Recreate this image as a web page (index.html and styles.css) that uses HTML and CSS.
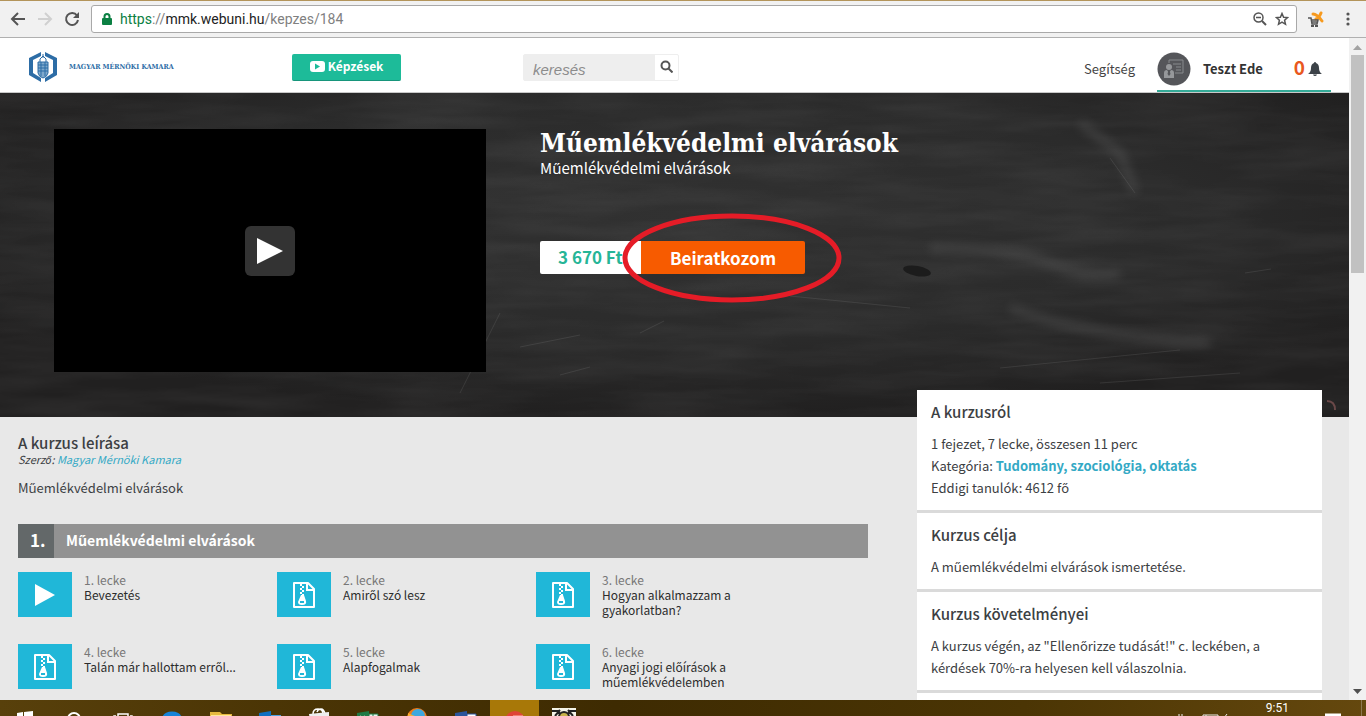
FILE: index.html
```html
<!DOCTYPE html>
<html lang="hu">
<head>
<meta charset="utf-8">
<title>Műemlékvédelmi elvárások</title>
<link rel="stylesheet" href="styles.css">
</head>
<body>
<svg class="defs" aria-hidden="true">
  <symbol id="zip" viewBox="0 0 24 28">
    <path fill="none" stroke="#fff" stroke-width="2" stroke-linejoin="round" d="M2 2h14l6 6v18H2z"/>
    <path fill="none" stroke="#fff" stroke-width="2" d="M15 2v7h7"/>
    <path fill="#fff" d="M8 3h2v2H8zM10 5h2v2h-2zM8 7h2v2H8zM10 9h2v2h-2zM8 11h2v2H8zM10 13h2v2h-2z"/>
    <path fill="#fff" fill-rule="evenodd" d="M9 14h3l2 6q1 4-4 4-4 0-4-3zM8 20v2h4v-2z"/>
  </symbol>
</svg>

<header class="browser">
  <button class="nav-btn" aria-label="Vissza"><svg width="16" height="16" viewBox="0 0 16 16"><path fill="none" stroke="#555" stroke-width="2" d="M15 8H2M8 2L2 8l6 6"/></svg></button>
  <button class="nav-btn" aria-label="Előre"><svg width="16" height="16" viewBox="0 0 16 16"><path fill="none" stroke="#d0d0d0" stroke-width="2" d="M1 8h13M8 2l6 6-6 6"/></svg></button>
  <button class="nav-btn" aria-label="Újratöltés"><svg width="16" height="16" viewBox="0 0 16 16"><path fill="none" stroke="#555" stroke-width="2" d="M13 4.500A6 6 0 1 0 14 9"/><path fill="#555" d="M15 1v6H9z"/></svg></button>
  <div class="address">
    <svg width="10" height="13" viewBox="0 0 10 13"><path fill="none" stroke="#0b8043" stroke-width="2" d="M2.500 6V3.500a2.500 2.500 0 0 1 5 0V6"/><rect y="5" width="10" height="7" rx="1" fill="#0b8043"/></svg>
    <span class="url"><span class="secure">https</span>://<span class="host">mmk.webuni.hu</span>/kepzes/184</span>
    <button class="nav-btn" aria-label="Nagyítás"><svg width="14" height="14" viewBox="0 0 14 14"><g fill="none" stroke="#555" stroke-width="1.500"><circle cx="5.500" cy="5.500" r="4.500"/><path d="M3 5.500h5"/><path stroke-width="2" d="M9 9l4 4"/></g></svg></button>
    <button class="nav-btn" aria-label="Könyvjelző"><svg width="14" height="14" viewBox="0 0 14 14"><path fill="none" stroke="#555" stroke-width="1.500" d="M7 1.500l1.600 3.700 4 .4-3 2.700.9 4L7 10.200l-3.500 2.100.9-4-3-2.700 4-.4z"/></svg></button>
  </div>
  <button class="nav-btn ext" aria-label="Bővítmény"><svg width="16" height="16" viewBox="0 0 16 16"><path fill="none" stroke="#f79a1e" stroke-width="3" stroke-linecap="round" d="M5 3q4 0 9 7M13 2q-2 5-5 6"/><path fill="none" stroke="#555" stroke-width="1.500" d="M0 7h3l1 6h5l1-4H3M4 11h5"/><path fill="#555" d="M3 14h3v2H3zM7 14h3v2H7z"/></svg></button>
  <button class="nav-btn" aria-label="Menü"><svg width="4" height="14" viewBox="0 0 4 14" fill="#555"><circle cx="2" cy="2" r="1.600"/><circle cx="2" cy="7" r="1.600"/><circle cx="2" cy="12" r="1.600"/></svg></button>
</header>

<div class="viewport">
  <div class="page">
    <div class="site-head">
      <a class="logo" href="#">
        <svg width="30" height="32" viewBox="0 0 30 32"><path fill="#2d6da6" d="M13 1v4L5 9v13l8 5v4L1 24V7zM17 1l12 6v17l-12 7v-4l8-5V9l-8-4z"/><path fill="#7fa9cc" stroke="#2d6da6" d="M10 11h10v11q-1 4-5 5-4-1-5-5z"/><path fill="none" stroke="#2d6da6" d="M12 11V8l3-3 3 3v3M10 14h10M10 17h10M10 20h10M13 11v14M17 11v14M15 3v4"/></svg>
        <span>MAGYAR MÉRNÖKI KAMARA</span>
      </a>
      <div class="head-nav"><button class="courses"><svg width="15" height="11" viewBox="0 0 15 11"><rect width="15" height="11" rx="3" fill="#fff"/><path fill="#1dbb99" d="M5 2.500l5 3-5 3z"/></svg>Képzések</button></div>
      <form class="search">
        <input type="text" placeholder="keresés" aria-label="keresés">
        <button type="button" aria-label="Keresés indítása"><svg width="13" height="13" viewBox="0 0 13 13"><g fill="none" stroke="#555" stroke-width="2"><circle cx="5.500" cy="5.500" r="4"/><path d="M8.500 8.500l4 4"/></g></svg></button>
      </form>
      <a class="help" href="#">Segítség</a>
      <a class="user" href="#">
        <svg width="34" height="34" viewBox="0 0 34 34"><circle cx="17" cy="17" r="16.500" fill="#55565a"/><g fill="none" stroke="#888a8d"><path d="M12 11V8h14v13h-8M16 12h8M19 15h5M19 18h5"/></g><circle cx="12" cy="15" r="3" fill="#96989b"/><path fill="#96989b" d="M7 26v-5q0-3 3-3l2 3 2-3q3 0 3 3v5z"/><path fill="#55565a" d="M11.500 18h1l1 4-1.500 2-1.500-2z"/></svg>
        <span class="name">Teszt Ede</span>
        <span class="count">0</span>
        <svg width="14" height="14" viewBox="0 0 14 14"><path fill="#3c4248" d="M7 0q1 0 1 1 3 1 3 5 0 4 3 6H0q3-2 3-6 0-4 3-5 0-1 1-1zM5 12.500h4q-.5 1.500-2 1.500t-2-1.500z"/></svg>
      </a>
    </div>

    <section class="hero">
      <svg class="board" preserveAspectRatio="none" viewBox="0 0 1349 324" aria-hidden="true">
        <defs>
          <radialGradient id="bg" cx=".5" cy=".38" r=".62"><stop offset="0" stop-color="#313131"/><stop offset=".6" stop-color="#2b2b2b"/><stop offset="1" stop-color="#212020"/></radialGradient>
          <filter id="grain"><feTurbulence type="fractalNoise" baseFrequency=".008 .06" numOctaves="3" seed="4"/><feColorMatrix values="0 0 0 0 .6 0 0 0 0 .6 0 0 0 0 .6 .2 0 0 0 -.06"/></filter>
          <filter id="soft"><feGaussianBlur stdDeviation="5"/></filter>
        </defs>
        <rect width="1349" height="324" fill="url(#bg)"/>
        <rect width="1349" height="324" filter="url(#grain)" opacity=".6"/>
        <g fill="none" stroke="#777" filter="url(#soft)" opacity=".25"><path stroke-width="9" d="M930 155q80 0 120 15t70 10M1010 215q80 30 200 35M1080 30l40 30 15 40"/></g>
        <ellipse cx="917" cy="178" rx="14" ry="5" fill="#161616" opacity=".8" transform="rotate(10 917 178)"/>
        <g fill="none" stroke="#999" opacity=".16"><path d="M520 254l60-12M790 203l120 12M1110 65l25 35M1000 275l180-18M1100 290l140-10M1245 180l26-4M460 300l40-80M640 240l24-12M560 282l30-8"/></g>
        <path fill="none" stroke="#6a4848" stroke-width="2" d="M1327 308q8 0 8 9"/>
      </svg>
      <div class="video"><button aria-label="Lejátszás"><svg width="26" height="26" viewBox="0 0 26 26"><path fill="#fff" d="M0 0l26 13L0 26z"/></svg></button></div>
      <div class="intro">
        <h1>Műemlékvédelmi elvárások</h1>
        <p>Műemlékvédelmi elvárások</p>
        <div class="purchase">
          <span class="price">3 670 Ft</span><button class="enroll">Beiratkozom</button>
          <svg class="mark" width="220" height="92" viewBox="0 0 220 92" aria-hidden="true"><ellipse cx="110" cy="46" rx="107" ry="42" fill="none" stroke="#e51c27" stroke-width="5"/></svg>
        </div>
      </div>
    </section>

    <div class="columns">
      <main class="course">
        <h2>A kurzus leírása</h2>
        <p class="author">Szerző: <a href="#">Magyar Mérnöki Kamara</a></p>
        <p class="desc">Műemlékvédelmi elvárások</p>
        <h3 class="chapter"><span class="num">1.</span><span class="chapter-name">Műemlékvédelmi elvárások</span></h3>
        <ul class="lessons">
          <li><span class="tile"><svg width="22" height="24" viewBox="0 0 22 24"><path fill="#fff" d="M1 1l20 11L1 23z"/></svg></span><p><span>1. lecke</span><a href="#">Bevezetés</a></p></li>
          <li><span class="tile"><svg width="24" height="28"><use href="#zip"/></svg></span><p><span>2. lecke</span><a href="#">Amiről szó lesz</a></p></li>
          <li><span class="tile"><svg width="24" height="28"><use href="#zip"/></svg></span><p><span>3. lecke</span><a href="#">Hogyan alkalmazzam a gyakorlatban?</a></p></li>
          <li><span class="tile"><svg width="24" height="28"><use href="#zip"/></svg></span><p><span>4. lecke</span><a href="#">Talán már hallottam erről...</a></p></li>
          <li><span class="tile"><svg width="24" height="28"><use href="#zip"/></svg></span><p><span>5. lecke</span><a href="#">Alapfogalmak</a></p></li>
          <li><span class="tile"><svg width="24" height="28"><use href="#zip"/></svg></span><p><span>6. lecke</span><a href="#">Anyagi jogi előírások a műemlékvédelemben</a></p></li>
        </ul>
      </main>
      <aside class="side">
        <section><h2>A kurzusról</h2><p>1 fejezet, 7 lecke, összesen 11 perc<br>Kategória: <a href="#">Tudomány, szociológia, oktatás</a><br>Eddigi tanulók: 4612 fő</p></section>
        <section><h2>Kurzus célja</h2><p>A műemlékvédelmi elvárások ismertetése.</p></section>
        <section><h2>Kurzus követelményei</h2><p>A kurzus végén, az "Ellenőrizze tudását!" c. leckében, a kérdések 70%-ra helyesen kell válaszolnia.</p></section>
        <section></section>
      </aside>
    </div>
  </div>
  <div class="scrollbar">
    <svg width="9" height="5" viewBox="0 0 9 5"><path fill="#a3a3a3" d="M0 5l4.500-5L9 5z"/></svg>
    <div class="thumb"></div>
    <svg width="9" height="5" viewBox="0 0 9 5"><path fill="#505050" d="M0 0l4.500 5L9 0z"/></svg>
  </div>
</div>

<footer class="taskbar">
  <div class="apps">
    <span><svg width="16" height="16" viewBox="0 0 16 16" fill="#fff"><path d="M0 2l6-1v7H0zM7 1l9-1v8H7zM0 9h16v7H0z"/></svg></span>
    <span><svg width="16" height="16" viewBox="0 0 16 16"><circle cx="8" cy="8" r="6" fill="none" stroke="#fff" stroke-width="2"/></svg></span>
    <span><svg width="20" height="16" viewBox="0 0 20 16" fill="none" stroke="#fff" stroke-width="1.500"><path d="M5 3h10v12H5zM3 5H1v10M17 5h2v10"/></svg></span>
    <span><svg width="20" height="20" viewBox="0 0 20 20"><path fill="none" stroke="#1683d8" stroke-width="5" d="M2 11q0-8 8-8t8 8H6"/></svg></span>
    <span><svg width="22" height="18" viewBox="0 0 22 18"><path fill="#e7b93f" d="M0 1h10l2 2h10v15H0z"/><path fill="#ffe79c" d="M1 4h20v14H1z"/></svg></span>
    <span><svg width="22" height="20" viewBox="0 0 22 20"><path fill="#0f6fc0" d="M0 2l12-2v20H0z"/><path fill="#4ca0e0" d="M12 4h10v16H12z"/><circle cx="6" cy="9" r="3" fill="none" stroke="#fff" stroke-width="2"/></svg></span>
    <span class="tall"><svg width="20" height="20" viewBox="0 0 20 20"><path fill="none" stroke="#fff" stroke-width="1.500" d="M4 6q0-5 5-5t5 5M8 4q1-3 4-3t4 5"/><path fill="#eee" d="M0 6l20-2v16H2z"/></svg></span>
    <span><svg width="22" height="20" viewBox="0 0 22 20"><path fill="#1f7a45" d="M0 2l12-2v20H0z"/><path fill="#e9f5ee" stroke="#1f7a45" d="M12 3h9v17h-9zM12 6h9M16 3v16"/><path stroke="#fff" stroke-width="2" d="M3 5l5 8M8 5l-5 8"/></svg></span>
    <span class="tall"><svg width="20" height="20" viewBox="0 0 20 20"><circle cx="10" cy="10" r="10" fill="#ee7b19"/><circle cx="11" cy="8" r="7" fill="#3da8df"/><path fill="#f9b233" d="M1 5l4 2 3 1-2 6-5-2z"/></svg></span>
    <span><svg width="22" height="20" viewBox="0 0 22 20"><path fill="#2b559b" d="M0 2l12-2v20H0z"/><path fill="#fff" stroke="#2b559b" d="M12 3h9v17h-9zM14 6h5M14 9h5"/></svg></span>
    <span class="active"><svg width="20" height="20" viewBox="0 0 20 20"><circle cx="10" cy="10" r="10" fill="#df4436"/><path stroke="#f0806f" stroke-width="2" d="M8 5h10"/></svg></span>
    <span class="tall"><svg width="24" height="20" viewBox="0 0 24 20"><path fill="#f4f4e8" d="M0 0h24v20H0z"/><path fill="none" stroke="#222" stroke-width="2" d="M0 3h6l3 4M24 3h-6l-3 4M3 8l5-6M21 8l-5-6"/><circle cx="12" cy="9" r="5" fill="#c7b34a" stroke="#222" stroke-width="2"/></svg></span>
  </div>
  <div class="tray">
    <svg width="54" height="8" viewBox="0 0 54 8" fill="none" stroke="#eee"><path d="M5 1v7M8 1v7M29 2h15v7H29zM32 2v7M53 1l-3 4h-2"/></svg>
    <time>9:51</time>
    <svg width="16" height="8" viewBox="0 0 16 8"><path fill="none" stroke="#fff" stroke-width="3" d="M1 8V2h14v6"/></svg>
    <span class="peek"></span>
  </div>
</footer>
</body>
</html>
```
FILE: styles.css
```css
* { box-sizing: border-box; }
body {
  margin: 0;
  height: 100vh;
  display: flex;
  flex-direction: column;
  overflow: hidden;
  font: 14px/22px "Noto Sans CJK JP", "Noto Sans", sans-serif;
  color: #3c4043;
}
h1, h2, h3, p, ul { margin: 0; padding: 0; }
button { border: 0; padding: 0; background: none; font: inherit; color: inherit; }
a { color: #33a9c5; text-decoration: none; }
svg { display: block; flex: none; }
.defs { display: block; position: absolute; width: 0; height: 0; }

.browser {
  flex: none;
  display: flex;
  align-items: center;
  gap: 11px;
  height: 38px;
  padding: 0 16px 0 10px;
  background: #f1f1f1;
  border-top: 1px solid #b3945a;
  border-bottom: 1px solid #b0b0b0;
}
.address {
  flex: 1;
  display: flex;
  align-items: center;
  gap: 8px;
  height: 28px;
  padding: 0 7px 0 10px;
  background: #fff;
  border: 1px solid #a9a9a9;
  border-radius: 3px;
  font: 14px/20px Roboto, sans-serif;
}
.url { flex: 1; color: #808080; }
.secure { color: #0b8043; }
.host { color: #222; }
.ext { margin-right: 11px; }

.viewport { flex: 1; min-height: 0; display: flex; }
.page { flex: 1; min-width: 0; overflow: hidden; background: #e8e8e8; }
.scrollbar {
  flex: none;
  width: 17px;
  display: flex;
  flex-direction: column;
  align-items: center;
  padding: 7px 0 6px;
  gap: 5px;
  background: #f1f1f1;
}
.thumb { width: 13px; height: 218px; margin-bottom: auto; background: #c1c1c1; }

.site-head {
  display: flex;
  height: 55px;
  padding: 0 18px 0 28px;
  background: #fff;
  border-bottom: 1px solid #c8c8c8;
}
.logo {
  flex: none;
  width: 264px;
  display: flex;
  align-items: center;
  gap: 11px;
  padding-top: 4px;
  font: bold 7px/10px "DejaVu Serif Condensed", "DejaVu Serif", serif;
  color: #2d6da6;
}
.head-nav { width: 231px; padding-top: 16px; }
.courses {
  display: flex;
  align-items: center;
  justify-content: center;
  gap: 3px;
  width: 109px;
  height: 27px;
  padding-bottom: 2px;
  background: #1dbb99;
  border-bottom: 1px solid #17957b;
  border-radius: 2px;
  font-size: 12px;
  font-weight: bold;
  color: #fff;
}
.search { display: flex; width: 156px; height: 27px; margin: 16px auto 0 0; border: 1px solid #eee; border-radius: 2px; }
.search input {
  flex: 1;
  min-width: 0;
  border: 0;
  padding: 4px 9px 0;
  background: #eee;
  font: italic 15px/20px "Liberation Sans", Arial, sans-serif;
}
.search input::placeholder { color: #8c8c8c; }
.search button { width: 23px; padding: 0 0 2px 5px; }
.help { padding-top: 21px; margin-right: 22px; font-size: 13px; line-height: 20px; color: #444; }
.user { display: flex; align-items: center; width: 174px; padding-top: 10px; border-bottom: 2px solid #35ab98; color: #333; }
.name { margin-left: 12px; font-size: 13px; font-weight: bold; }
.count { margin: 0 3px 0 auto; padding-bottom: 4px; font-size: 19px; font-weight: bold; color: #e9581e; }
.user svg:last-child { margin-right: 9px; }

.hero { position: relative; display: flex; gap: 54px; padding: 36px 54px 45px; background: #2b2b2b; }
.board { position: absolute; inset: 0; width: 100%; height: 100%; }
.video {
  position: relative;
  flex: none;
  display: grid;
  place-items: center;
  width: 432px;
  height: 243px;
  background: #000;
}
.video button { display: grid; place-items: center; width: 50px; height: 50px; background: #333; border-radius: 6px; }
.intro { position: relative; color: #fff; }
h1 { font: bold 26px/28px "DejaVu Serif Condensed", "DejaVu Serif", serif; }
.intro p { font-size: 15px; line-height: 22px; }
.purchase { position: relative; display: inline-flex; margin-top: 62px; height: 33px; font-size: 17px; font-weight: bold; line-height: 32px; }
.price { width: 101px; padding-left: 18px; white-space: nowrap; background: #fff; color: #26b597; border-radius: 2px 0 0 2px; }
.enroll { width: 164px; background: #f75b00; color: #fff; border-radius: 0 2px 2px 0; line-height: 32px; }
.mark { position: absolute; left: 82px; top: -29px; }

.columns { display: flex; gap: 49px; padding: 0 27px 0 18px; }
.course { flex: 1; padding-top: 17px; }
h2 { font-size: 15px; line-height: 18px; font-weight: 500; }
.author { font-size: 11px; line-height: 14px; font-style: italic; }
.desc { margin-top: 12px; font-size: 13px; line-height: 20px; }
.chapter { display: flex; margin-top: 26px; height: 34px; line-height: 32px; background: #929292; color: #fff; font-size: 14px; }
.num { width: 36px; padding-left: 12px; background: #636869; font-size: 17px; }
.chapter-name { padding-left: 12px; }
.lessons { display: grid; grid-template-columns: repeat(3, minmax(0, 259px)); row-gap: 27px; margin-top: 14px; list-style: none; }
.lessons li { display: flex; gap: 12px; min-height: 45px; padding-right: 26px; }
.tile { flex: none; display: grid; place-items: center; width: 54px; height: 45px; background: #20b7d8; }
.lessons p { font-size: 12px; line-height: 15px; }
.lessons p span { display: block; color: #777; }
.lessons p a { color: #2c2c2c; }

.side { flex: none; width: 405px; margin-top: -27px; position: relative; }
.side section { padding: 13px 14px 11px; background: #fff; border-bottom: 3px solid #dadada; }
.side h2 { margin-bottom: 12px; }
.side p { font-size: 13px; }
.side a { font-weight: bold; }

.taskbar { flex: none; display: flex; justify-content: space-between; height: 16px; overflow: hidden; background: linear-gradient(90deg, #58400b, #4b3505 20%, #3e2b02 45%, #4b3504 75%, #65480e); }
.apps { display: flex; }
.apps span { display: flex; justify-content: center; align-items: flex-start; width: 49px; padding-top: 11px; }
.apps .tall { padding-top: 8px; }
.apps .active { background: #a87808; }
.tray { display: flex; align-items: flex-start; gap: 32px; }
.tray svg { margin-top: 13px; }
.tray time { margin: 0 4px 0 6px; font: 12px/16px Roboto, sans-serif; color: #fff; }
.tray svg:nth-of-type(2) { margin-right: -12px; }
.peek { width: 5px; height: 16px; border-left: 1px solid #8d7850; }
```
